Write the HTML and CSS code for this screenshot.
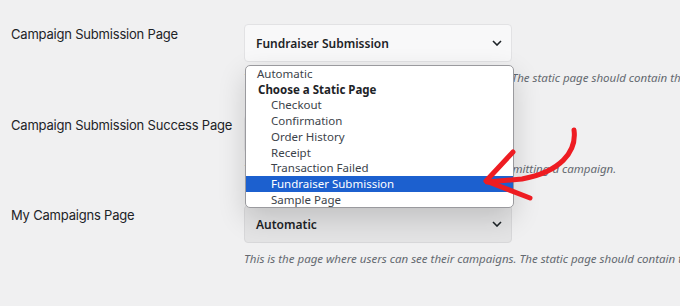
FILE: index.html
```html
<!DOCTYPE html>
<html lang="en">
<head>
    <meta charset="UTF-8">
    <meta name="viewport" content="width=device-width, initial-scale=1.0">
    <title>Campaign Pages Settings</title>
    <link rel="stylesheet" href="styles.css">
</head>
<body>
    <div class="settings">
        <div class="label">Campaign Submission Page</div>
        <div class="field">
            <div class="select">
                <span>Fundraiser Submission</span>
                <svg class="chevron" viewBox="0 0 10 6" width="10" height="6"><path d="M1 1 L5 5 L9 1"/></svg>
            </div>
            <div class="desc">This is the page where users can submit campaigns. The static page should contain the <code>[charitable_submit_campaign]</code> shortcode.</div>
            <ul class="dropdown">
                <li class="top">Automatic</li>
                <li class="group">Choose a Static Page</li>
                <li>Checkout</li>
                <li>Confirmation</li>
                <li>Order History</li>
                <li>Receipt</li>
                <li>Transaction Failed</li>
                <li class="selected">Fundraiser Submission</li>
                <li>Sample Page</li>
            </ul>
        </div>

        <div class="label">Campaign Submission Success Page</div>
        <div class="field">
            <div class="select">
                <span>Automatic</span>
                <svg class="chevron" viewBox="0 0 10 6" width="10" height="6"><path d="M1 1 L5 5 L9 1"/></svg>
            </div>
            <div class="desc">This is the page that users are redirected to after submitting a campaign.</div>
        </div>

        <div class="label">My Campaigns Page</div>
        <div class="field">
            <div class="select shaded">
                <span>Automatic</span>
                <svg class="chevron" viewBox="0 0 10 6" width="10" height="6"><path d="M1 1 L5 5 L9 1"/></svg>
            </div>
            <div class="desc">This is the page where users can see their campaigns. The static page should contain the <code>[charitable_my_campaigns]</code> shortcode.</div>
        </div>
    </div>

    <svg class="arrow" viewBox="470 120 130 90" width="130" height="90">
        <path d="M574 130 C577 152 560 172 522 179 L487 182"/>
        <path d="M513 152 L486 181 L530 198"/>
    </svg>
</body>
</html>
```

FILE: styles.css
```css
body {
    margin: 0;
    background: #f0f0f1;
    font-family: Inter, "Noto Sans", sans-serif;
    color: #1d2327;
    width: 680px;
    height: 306px;
    overflow: hidden;
    position: relative;
}

.settings {
    display: grid;
    grid-template-columns: 233px 268px;
    row-gap: 28px;
    padding: 24px 0 0 11px;
}

.label {
    font-size: 13px;
    letter-spacing: -0.2px;
    line-height: 18px;
    padding-top: 1px;
    white-space: nowrap;
}

.field {
    position: relative;
}

.select {
    height: 38px;
    box-sizing: border-box;
    border: 1px solid #e2e2e4;
    border-radius: 4px;
    background: #f8f8f9;
    display: flex;
    align-items: center;
    justify-content: space-between;
    padding: 0 9px 0 11px;
    font-family: "Noto Sans", sans-serif;
    font-size: 12px;
    font-weight: 600;
}

.select.shaded {
    background: #e4e4e5;
    border-color: #d8d8da;
}

.chevron {
    fill: none;
    stroke: #1d2327;
    stroke-width: 1.6;
}

.desc {
    margin-top: 8px;
    line-height: 16px;
    font-family: "Noto Sans", sans-serif;
    font-size: 11.5px;
    font-style: italic;
    color: #646970;
    white-space: nowrap;
}

.desc code {
    font-style: normal;
    background: #e4e4e6;
    padding: 2px 4px;
    font-size: 11px;
}

.dropdown {
    position: absolute;
    top: 41px;
    left: 1px;
    width: 267px;
    margin: 0;
    padding: 0;
    list-style: none;
    background: #fff;
    border: 1px solid #9a9a9e;
    border-radius: 5px;
    box-shadow: 0 10px 28px rgba(0, 0, 0, 0.16);
    font-family: "Noto Sans", sans-serif;
    font-size: 11.5px;
    color: #3c434a;
    overflow: hidden;
    z-index: 2;
}

.dropdown li {
    line-height: 15.7px;
    padding-left: 25px;
}

.dropdown li.top {
    padding-left: 11px;
}

.dropdown li.group {
    padding-left: 12px;
    font-weight: 700;
    color: #1d2327;
}

.dropdown li.selected {
    background: #1c60cf;
    color: #fff;
}

.arrow {
    position: absolute;
    left: 470px;
    top: 120px;
    z-index: 3;
    fill: none;
    stroke: #ee1c22;
    stroke-width: 5;
    stroke-linecap: round;
    stroke-linejoin: round;
}
```
